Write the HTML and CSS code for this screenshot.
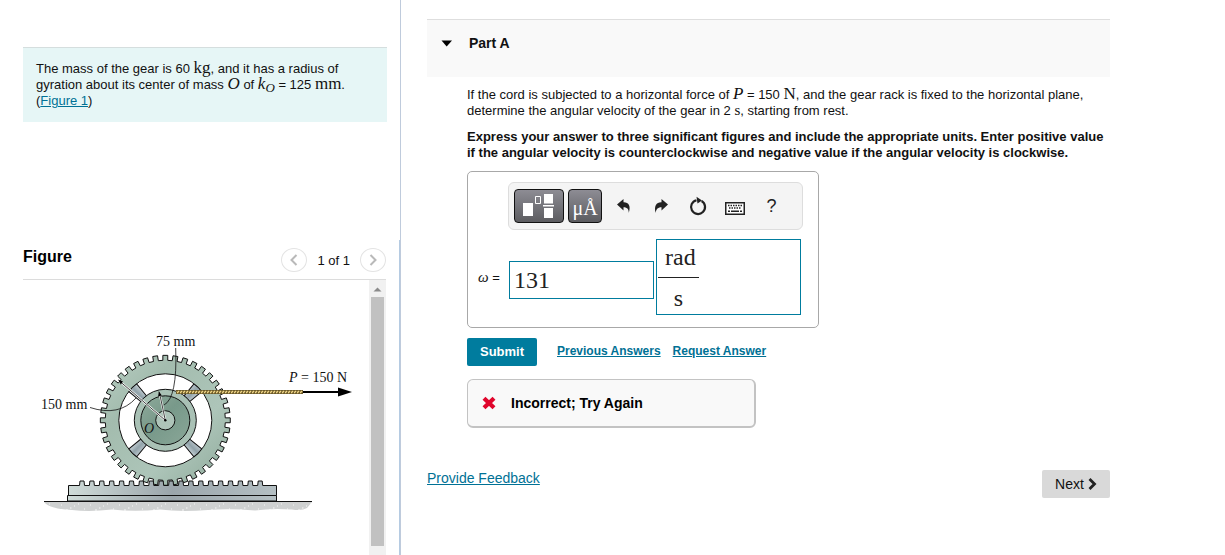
FILE: index.html
```
<!DOCTYPE html>
<html lang="en">
<head>
<meta charset="utf-8">
<title>Part A</title>
<meta name="viewport" content="width=device-width, initial-scale=1">
<link rel="stylesheet" href="styles.css">
</head>
<body>
<div class="page">
  <aside class="side">
    <section class="intro">
      <p>The mass of the gear is 60 <span class="math">kg</span>, and it has a radius of gyration about its center of mass <i class="math">O</i> of <i class="math">k<sub>O</sub></i> = 125 <span class="math">mm</span>. (<a href="#figure">Figure 1</a>)</p>
    </section>
    <section class="figure" id="figure">
      <header class="figure-head">
        <h2>Figure</h2>
        <nav class="pager">
          <button type="button" class="round" aria-label="Previous figure"><svg width="10" height="14" viewBox="0 0 10 14"><path d="M7.5 2L2.5 7l5 5"/></svg></button>
          <span class="count">1 of 1</span>
          <button type="button" class="round" aria-label="Next figure"><svg width="10" height="14" viewBox="0 0 10 14"><path d="M2.5 2l5 5-5 5"/></svg></button>
        </nav>
      </header>
      <div class="figure-body">
        <svg class="drawing" viewBox="23 280 346 275" role="img" aria-label="Gear on a fixed rack pulled by a cord">
          <defs>
            <linearGradient id="gearFill" x1="0" y1="0" x2="1" y2="1"><stop offset="0" stop-color="#b9cec3"/><stop offset=".3" stop-color="#a3bcae"/><stop offset=".65" stop-color="#adc5b9"/><stop offset="1" stop-color="#8faa9b"/></linearGradient>
            <linearGradient id="hubFill" x1="0" y1="0" x2="1" y2="1"><stop offset="0" stop-color="#8faa9b"/><stop offset=".45" stop-color="#78998a"/><stop offset="1" stop-color="#8aa798"/></linearGradient>
            <linearGradient id="rackFill" x1="0" y1="0" x2="1" y2="0"><stop offset="0" stop-color="#cfdbd8"/><stop offset=".5" stop-color="#9ba5ab"/><stop offset="1" stop-color="#b4bfc3"/></linearGradient>
            <linearGradient id="spokeFill" x1="0" y1="0" x2="1" y2="0"><stop offset="0" stop-color="#b8c4ca"/><stop offset=".5" stop-color="#92a3aa"/><stop offset="1" stop-color="#c5d0d4"/></linearGradient>
            <pattern id="ropeFill" width="3" height="4" y="390" patternUnits="userSpaceOnUse"><rect width="3" height="4" fill="#6d5b2a"/><path d="M0 3l2-2" stroke="#f0d586" stroke-width="1.5"/></pattern>
            <pattern id="soil" width="29" height="9" y="502" patternUnits="userSpaceOnUse"><rect width="29" height="9" fill="#cfd1d1"/><path d="M3 3h1M12 6h1.500M20 2h1M26 7h1M8 8h2M16 4h1" stroke="#f7f7f7"/></pattern>
          </defs>
          <path d="M44 502H312L307 508Q302 511 292 509.500Q272 508 255 510.500Q230 508.500 208 510Q180 512 160 509.500Q135 512 112 509.500Q90 512 72 510Q50 509 44 502Z" fill="url(#soil)"/>
          <path class="ink" d="M44 501.500H312"/>
          <path id="gear" class="ink" fill="url(#gearFill)" fill-rule="evenodd"/>
          <g class="ink" fill="url(#spokeFill)" transform="translate(165.3 420.3)">
            <path id="spoke" d="M-4-30.500L-5.500-46Q0-47 5.500-46L4-30.500Z" transform="rotate(45)"/>
            <use href="#spoke" transform="rotate(90)"/><use href="#spoke" transform="rotate(180)"/><use href="#spoke" transform="rotate(270)"/>
          </g>
          <path id="rack" class="ink" fill="url(#rackFill)"/>
          <path class="ink" fill="url(#rackFill)" d="M67.500 495.500H276.500V501H67.500Z"/>
          <g class="ink">
            <circle cx="165.300" cy="420.300" r="31" fill="#a9c1b5"/>
            <circle cx="165.300" cy="420.300" r="24.500" fill="url(#hubFill)"/>
            <circle cx="165.300" cy="420.300" r="9.600" fill="#aec4b9"/>
          </g>
          <rect x="176" y="390" width="127" height="4" fill="url(#ropeFill)"/>
          <path d="M303 392H341" stroke="#000" stroke-width="2"/>
          <path d="M338 387.500L352 392L338 396.500Z"/>
          <g class="halo"><path d="M165.300 420.300L120 381.500M165.300 420.300L159.500 393"/></g>
          <g class="ink thin"><path d="M165.300 420.300L120 381.500M165.300 420.300L159.500 393M175.700 348Q177.500 398 164 405M90 407.500Q119 417 136 398"/></g>
          <path d="M118 379.500l5 2-2.200 3zM158.800 391l3 4.500-3.600.8z"/>
          <circle cx="165.300" cy="420.300" r="1.200"/>
          <g class="labels">
            <text x="156" y="346">75 mm</text>
            <text x="41" y="409">150 mm</text>
            <text x="289" y="382"><tspan class="slant">P</tspan> = 150 N</text>
            <text x="144" y="433" class="slant">O</text>
          </g>
        </svg>
        <div class="scrollbar" aria-hidden="true"><svg width="9" height="5" viewBox="0 0 9 5"><path d="M0.500 4.500L4.500 0.500L8.500 4.500Z" fill="#8b8b8b"/></svg><div class="thumb"></div></div>
      </div>
    </section>
  </aside>

  <main class="main">
    <header class="part">
      <button type="button" class="toggle" aria-expanded="true"><svg width="12" height="7" viewBox="0 0 12 7"><path d="M.5.500H11L5.700 6.500Z"/></svg><span>Part A</span></button>
    </header>
    <div class="question">
      <p>If the cord is subjected to a horizontal force of <i class="math">P</i> = 150 <span class="math">N</span>, and the gear rack is fixed to the horizontal plane, <br>determine the angular velocity of the gear in 2 <span class="math-small">s</span>, starting from rest.</p>
      <p class="strong">Express your answer to three significant figures and include the appropriate units. Enter positive value <br>if the angular velocity is counterclockwise and negative value if the angular velocity is clockwise.</p>
      <form class="answer" onsubmit="return false">
        <div class="toolbar">
          <button type="button" class="key wide" aria-label="Templates"><svg width="32" height="26" viewBox="0 0 32 26" fill="#fff"><path d="M0 10h10v13H0z"/><path d="M12.500 3.500h5v7h-5z" fill="none" stroke="#fff"/><path d="M21 1h9v9.500h-9zM20 12h11v1.500H20zM21 15h9v10h-9z"/></svg></button>
          <button type="button" class="key units" aria-label="Units">μÅ</button>
          <button type="button" class="tool" aria-label="Undo"><svg width="16" height="16" viewBox="0 0 16 16"><path d="M1 6.500L7.500 1V4.200C12.500 4 15.200 7.500 12.700 15C13 11.500 11.500 9.200 7.500 9.200V12.500Z"/></svg></button>
          <button type="button" class="tool" aria-label="Redo"><svg width="16" height="16" viewBox="0 0 16 16"><path d="M15 6.500L8.500 1V4.200C3.500 4 .8 7.500 2.600 15C3 11.500 4.500 9.200 8.500 9.200V12.500Z"/></svg></button>
          <button type="button" class="tool" aria-label="Reset"><svg width="18" height="20" viewBox="0 0 18 20"><path d="M12.600 5A7 7 0 1 1 7.500 4.200" fill="none" stroke="#222" stroke-width="2.200"/><path d="M7.500.800L13 4.400L8.500 7.500Z"/></svg></button>
          <button type="button" class="tool keyboard" aria-label="Keyboard"><svg width="20" height="13" viewBox="0 0 20 13"><rect x=".75" y=".75" width="18.500" height="11.500" fill="#fff" stroke="#222" stroke-width="1.500"/><path d="M3 3.500h14M4 6h12" stroke="#222" stroke-width="1.500" stroke-dasharray="1.500 1"/><path d="M3 9.200h2M6 9.200h8M15 9.200h2" stroke="#222" stroke-width="1.500"/></svg></button>
          <button type="button" class="tool help" aria-label="Help">?</button>
        </div>
        <div class="fields">
          <label class="omega" for="value"><i>ω</i> =</label>
          <input class="value" id="value" type="text" value="131">
          <div class="unit" role="textbox" tabindex="0" aria-label="Units">
            <span class="fraction"><span class="top">rad</span><span class="bottom">s</span></span>
          </div>
        </div>
      </form>
      <div class="actions">
        <button type="submit" class="submit">Submit</button>
        <a href="#previous">Previous Answers</a>
        <a href="#request">Request Answer</a>
      </div>
      <div class="result" role="status">
        <svg width="14" height="14" viewBox="0 0 14 14"><path d="M2 2.200L12 11.800M12 2.200L2 11.800" stroke="#e0062c" stroke-width="4.200"/></svg>
        <span>Incorrect; Try Again</span>
      </div>
    </div>
    <footer class="foot">
      <a href="#feedback">Provide Feedback</a>
      <button type="button" class="next">Next <svg width="9" height="12" viewBox="0 0 9 12"><path d="M1.500 1L6.500 6L1.500 11" fill="none" stroke="#222" stroke-width="2.800"/></svg></button>
    </footer>
  </main>
</div>
<script src="drawing.js"></script>
</body>
</html>
```
FILE: styles.css
```
* { box-sizing: border-box; }
body { margin: 0; background: #fff; color: #111; font: 13px/16px "Liberation Sans", Arial, sans-serif; }
p, h2 { margin: 0; }
a { color: #007195; }
button { margin: 0; padding: 0; border: 0; background: none; color: inherit; font: inherit; cursor: pointer; }
svg { display: block; }
.page { display: flex; min-height: 100vh; }
.side { flex: 0 0 401px; display: flex; flex-direction: column; border-right: 1px solid #bfcbdc; padding-top: 47px; }
.intro { margin: 0 13px 0 23px; padding: 13px 28px 13px 13px; background: #e6f6f6; border-top: 1px solid #d5dede; min-height: 75px; }
.math { font-family: "Liberation Serif", "Times New Roman", serif; font-size: 17px; line-height: 13px; }
.math sub { font-size: 13px; line-height: 6px; vertical-align: -3px; }
.math-small { font-family: "Liberation Serif", serif; font-size: 15px; line-height: 14px; }
.figure { flex: 1; display: flex; flex-direction: column; margin-top: 118px; padding: 0 13px 0 23px; border-right: 1px solid #b5cbe2; }
.figure-head { display: flex; align-items: center; justify-content: space-between; height: 40px; border-bottom: 1px solid #dcdcdc; }
.figure-head h2 { font-size: 16px; line-height: 20px; padding-bottom: 6px; color: #000; }
.pager { display: flex; align-items: center; gap: 10px; }
.round { width: 26px; height: 24px; border: 1px solid #e3e3e3; border-radius: 50%; display: grid; place-items: center; }
.round path { fill: none; stroke: #b9b9b9; stroke-width: 2; }
.count { font-size: 13px; padding-top: 2px; }
.figure-body { flex: 1; display: flex; align-items: flex-start; }
.drawing { flex: 1; min-width: 0; }
.ink { stroke: #111; stroke-width: 1; }
.thin { fill: none; stroke-width: 0.8px; }
.halo { stroke: #fff; stroke-width: 2; fill: none; }
.labels { font: 14px "Liberation Serif", "Times New Roman", serif; fill: #111; }
.slant { font-style: italic; }
.scrollbar { width: 17px; align-self: stretch; background: #f1f1f1; display: flex; flex-direction: column; align-items: center; padding: 7px 2px 9px; gap: 5px; }
.thumb { flex: 1; width: 13px; background: #c1c1c1; }
.main { flex: 1; min-width: 0; padding: 19px 115px 0 26px; }
.part { height: 58px; padding: 15px 14px; border-top: 1px solid #dedede; background: #f9f9f9; }
.toggle { display: flex; align-items: center; gap: 16px; font-size: 14px; font-weight: bold; }
.question { padding: 10px 0 0 40px; }
.question p { white-space: nowrap; }
.question .strong { margin-top: 10px; font-weight: bold; }
.answer { width: 352px; height: 157px; margin-top: 10px; padding: 10px 15px 0 10px; border: 1px solid #a8a8a8; border-radius: 5px; }
.toolbar { height: 48px; margin-left: 30px; padding: 0 5px; display: flex; align-items: center; background: #f4f4f4; border: 1px solid #ddd; border-radius: 6px; }
.key { width: 34px; height: 34px; margin-right: 3px; display: grid; place-items: center; border: 1px solid #111; border-radius: 4px; background: linear-gradient(#8d8c94, #5c5c60); color: #fff; font: 20px/24px "Liberation Serif", serif; }
.wide { width: 50px; margin-right: 4px; }
.units { padding-top: 4px; }
.tool { width: 37px; height: 34px; display: grid; place-items: center; color: #222; fill: #222; }
.keyboard { padding-top: 4px; }
.help { font-size: 18px; }
.fields { display: flex; align-items: center; margin-top: 9px; gap: 2px; }
.omega { width: 29px; font-size: 13px; white-space: nowrap; }
.omega i { font-family: "Liberation Serif", serif; font-size: 15px; }
.value { width: 145px; height: 38px; margin-top: 6px; padding: 0 4px; border: 1px solid #007c9e; background: #fff; color: #222; font: 24px "Liberation Serif", serif; }
.unit { width: 145px; height: 76px; padding: 1px; border: 1px solid #007c9e; color: #222; font: 24px/32px "Liberation Serif", serif; }
.fraction { display: inline-flex; flex-direction: column; text-align: center; }
.top { height: 37px; padding: 0 3px 0 7px; border-bottom: 1px solid #222; }
.bottom { padding-top: 4px; }
.actions { display: flex; align-items: center; margin-top: 10px; gap: 12px; font-size: 12px; font-weight: bold; }
.submit { width: 70px; height: 28px; margin-right: 8px; border-radius: 2px; background: #007c9e; color: #fff; font-size: 13px; }
.actions a { padding-bottom: 2px; }
.result { width: 289px; height: 49px; margin-top: 13px; padding-left: 14px; display: flex; align-items: center; gap: 15px; border: 1px solid #c3c3c3; border-width: 1px 2px 2px 1px; border-radius: 6px; background: #f9f9f9; color: #000; font-size: 14px; font-weight: bold; }
.foot { display: flex; align-items: center; justify-content: space-between; margin-top: 42px; font-size: 14px; }
.foot a { padding-bottom: 12px; }
.next { display: flex; align-items: center; justify-content: center; gap: 4px; width: 68px; height: 28px; background: #d9d9d9; border-radius: 2px; color: #111; }
```
FILE: drawing.js
```
// Builds the toothed outlines of the gear and the rack.
const cx = 165.3, cy = 420.3, teeth = 40;
const at = (r, a) => `${(cx + r * Math.cos(a)).toFixed(2)} ${(cy + r * Math.sin(a)).toFixed(2)}`;
const step = 2 * Math.PI / teeth;
const rim = [];
for (let i = 0; i < teeth; i++) {
  const a = i * step;
  rim.push(at(60, a - step * 0.26), at(65, a - step * 0.24), at(65, a + step * 0.24), at(60, a + step * 0.26));
}
const hole = `M${at(46.5, 0)}A46.5 46.5 0 1 0 ${at(46.5, Math.PI)}A46.5 46.5 0 1 0 ${at(46.5, 0)}Z`;
document.getElementById('gear').setAttribute('d', `M${rim.join('L')}Z${hole}`);

let rack = 'M68.5 485.500H79.500';
for (let i = 0; i < 19; i++) {
  const x = 79.5 + i * 9.9;
  rack += `L${x + 0.5} 481H${x + 4.5}L${x + 5} 485.5${i < 18 ? `H${x + 9.9}` : ''}`;
}
document.getElementById('rack').setAttribute('d', rack + 'H276.500V495.500H68.500Z');
```
